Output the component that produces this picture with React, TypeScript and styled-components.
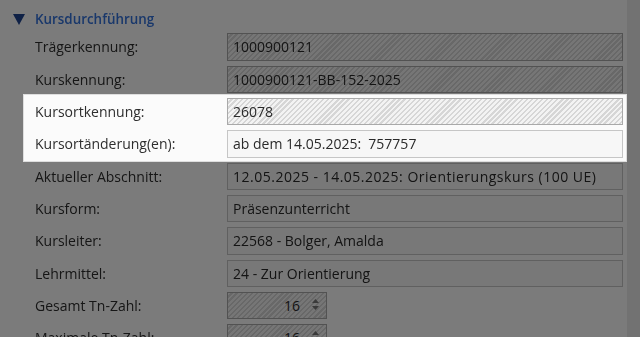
import styled, { createGlobalStyle, css } from "styled-components";

const GlobalStyle = createGlobalStyle`
  html, body {
    margin: 0;
    padding: 0;
    background: #ebebeb;
  }
  body {
    font-family: "Open Sans", "Noto Sans", sans-serif;
  }
`;

const Page = styled.div`
  position: relative;
  width: 640px;
  height: 337px;
  overflow: hidden;
  background: #ebebeb;
`;

const Panel = styled.div`
  width: 627px;
  height: 100%;
  background: #fdfdfd;
  padding-top: 10px;
  box-sizing: border-box;
`;

const Overlay = styled.div`
  position: absolute;
  inset: 0;
  z-index: 1;
  background: rgba(0, 0, 0, 0.515);
`;

const Dim = css`
  filter: blur(0.6px);
`;

const Header = styled.div`
  ${Dim};
  display: flex;
  align-items: center;
  gap: 10px;
  height: 18px;
  padding-left: 13px;
`;

const Title = styled.span`
  font-size: 13.4px;
  font-weight: 600;
  color: #3573dc;
`;

const Rows = styled.div`
  display: flex;
  flex-direction: column;
  gap: 5px;
  width: 588px;
  margin-top: 5.3px;
  padding-left: 35px;
`;

const Row = styled.div<{ $dimmed?: boolean }>`
  ${(p) => p.$dimmed && Dim};
  display: grid;
  grid-template-columns: 192px 396px;
  align-items: center;
  height: 27.33px;
`;

const Spotlight = styled.div`
  position: relative;
  z-index: 2;
  display: flex;
  flex-direction: column;
  gap: 5px;
  margin: -3.3px -3px -3.3px -11px;
  padding: 3.3px 3px 3.3px 11px;
  background: #fbfbfb;
  box-shadow: 0 0 0 1px #dedede;
`;

const Label = styled.label`
  font-size: 14px;
  color: #2e2e2e;
`;

const hatch = css`
  background: repeating-linear-gradient(
    135deg,
    #f3f3f3 0px,
    #f3f3f3 2px,
    #d6d6d6 2px,
    #d6d6d6 3.6px
  );
  border-color: #a9a9a9;
`;

const Field = styled.div<{
  $readonly?: boolean;
  $narrow?: boolean;
  $wide?: boolean;
}>`
  box-sizing: border-box;
  height: 27.33px;
  width: ${(p) => (p.$narrow ? "100px" : "396px")};
  display: flex;
  align-items: center;
  padding: 0 5px;
  border: 1px solid #c6c6c6;
  background: #f7f7f7;
  font-size: 14px;
  color: #2a2a2a;
  white-space: pre;
  letter-spacing: ${(p) => (p.$wide ? "0.5px" : "0")};
  ${(p) => p.$readonly && hatch};
  ${(p) =>
    p.$narrow &&
    css`
      justify-content: flex-end;
      padding-right: 26px;
      position: relative;
    `};
`;

const Spinner = styled.div`
  position: absolute;
  right: 7px;
  top: 6px;
  display: flex;
  flex-direction: column;
  gap: 3px;
`;

const Triangle = () => (
  <svg width="12" height="11" viewBox="0 0 12 11">
    <path d="M0 0 H12 L6 11 Z" fill="#1f4590" />
  </svg>
);

const Arrow = ({ up }: { up?: boolean }) => (
  <svg width="7" height="4" viewBox="0 0 7 4">
    <path d={up ? "M0 4 L3.5 0 L7 4 Z" : "M0 0 L7 0 L3.5 4 Z"} fill="#777" />
  </svg>
);

const before = [
  { label: "Trägerkennung:", value: "1000900121", readonly: true },
  { label: "Kurskennung:", value: "1000900121-BB-152-2025", readonly: true },
];

const highlighted = [
  { label: "Kursortkennung:", value: "26078", readonly: true },
  { label: "Kursortänderung(en):", value: "ab dem 14.05.2025:  757757" },
];

const after = [
  {
    label: "Aktueller Abschnitt:",
    value: "12.05.2025 - 14.05.2025: Orientierungskurs (100 UE)",
    wide: true,
  },
  { label: "Kursform:", value: "Präsenzunterricht" },
  { label: "Kursleiter:", value: "22568 - Bolger, Amalda" },
  { label: "Lehrmittel:", value: "24 - Zur Orientierung" },
];

const numbers = [
  { label: "Gesamt Tn-Zahl:", value: "16" },
  { label: "Maximale Tn-Zahl:", value: "16" },
];

export default function App() {
  return (
    <Page>
      <GlobalStyle />
      <Panel>
        <Header>
          <Triangle />
          <Title>Kursdurchführung</Title>
        </Header>
        <Rows>
          {before.map((r) => (
            <Row key={r.label} $dimmed>
              <Label>{r.label}</Label>
              <Field $readonly={r.readonly}>{r.value}</Field>
            </Row>
          ))}
          <Spotlight>
            {highlighted.map((r) => (
              <Row key={r.label}>
                <Label>{r.label}</Label>
                <Field $readonly={r.readonly}>{r.value}</Field>
              </Row>
            ))}
          </Spotlight>
          {after.map((r) => (
            <Row key={r.label} $dimmed>
              <Label>{r.label}</Label>
              <Field $wide={r.wide}>{r.value}</Field>
            </Row>
          ))}
          {numbers.map((r) => (
            <Row key={r.label} $dimmed>
              <Label>{r.label}</Label>
              <Field $readonly $narrow>
                {r.value}
                <Spinner>
                  <Arrow up />
                  <Arrow />
                </Spinner>
              </Field>
            </Row>
          ))}
        </Rows>
      </Panel>
      <Overlay />
    </Page>
  );
}
